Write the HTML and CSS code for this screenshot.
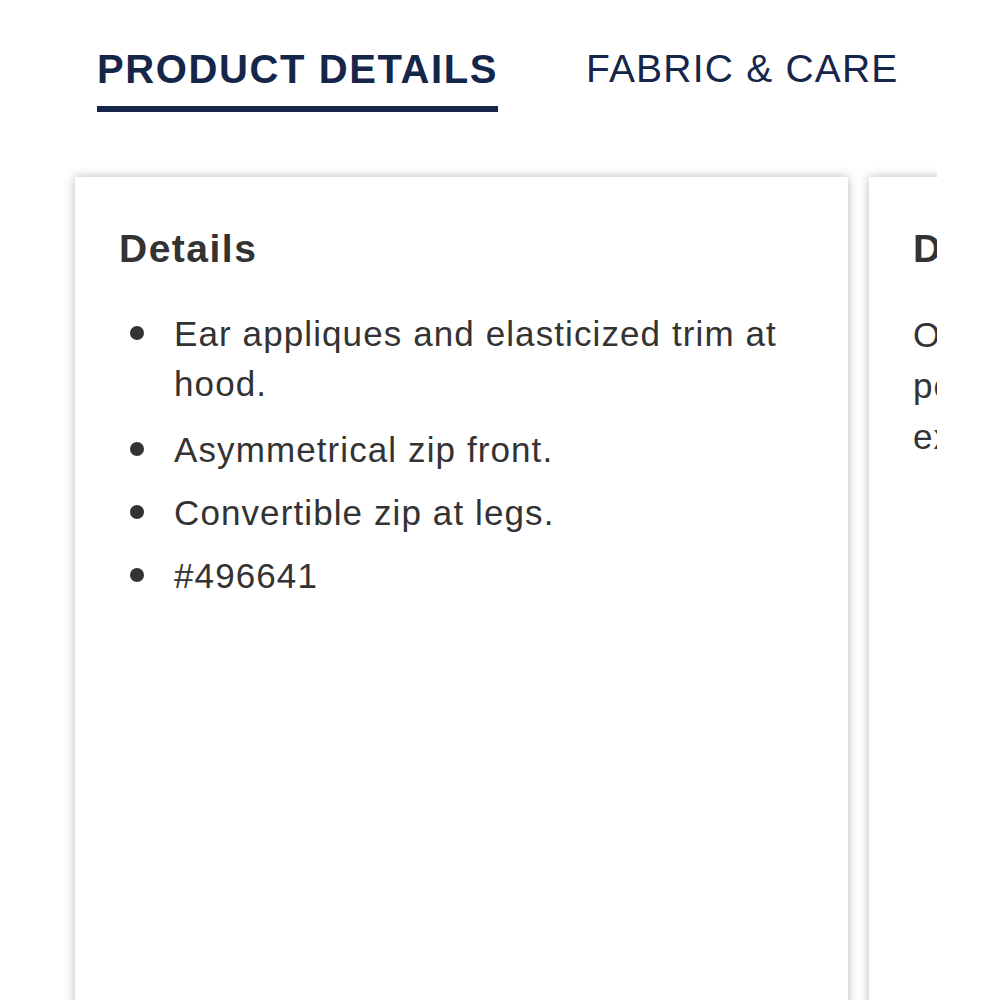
FILE: index.html
```html
<!DOCTYPE html>
<html>
<head>
<meta charset="utf-8">
<link rel="stylesheet" href="styles.css">
</head>
<body>
<nav class="tabs">
  <div class="tab active">PRODUCT DETAILS</div>
  <div class="tab">FABRIC &amp; CARE</div>
</nav>
<div class="carousel">
  <div class="track">
    <section class="card">
      <h2 class="card-title">Details</h2>
      <ul class="list">
        <li>Ear appliques and elasticized trim at hood.</li>
        <li>Asymmetrical zip front.</li>
        <li>Convertible zip at legs.</li>
        <li>#496641</li>
      </ul>
    </section>
    <section class="card">
      <h2 class="card-title">Description</h2>
      <p class="text">Our cozy bunting keeps baby warm in the<br>perfect weather, with a roomy fit for<br>extra layers underneath.</p>
    </section>
  </div>
</div>
</body>
</html>
```
FILE: styles.css
```css
html, body {
  margin: 0;
  padding: 0;
  background: #fff;
}
body {
  font-family: "Liberation Sans", Arial, Helvetica, sans-serif;
  color: #333;
  overflow: hidden;
  height: 1000px;
}
.tabs {
  display: flex;
  gap: 88px;
  padding: 47px 0 0 97px;
}
.tab {
  font-size: 39px;
  line-height: 44px;
  letter-spacing: 1.2px;
  color: #16254a;
  padding-bottom: 15px;
  border-bottom: 6px solid transparent;
  white-space: nowrap;
}
.tab.active {
  font-weight: bold;
  font-size: 40px;
  letter-spacing: 1.6px;
  border-bottom-color: #16254a;
}
.carousel {
  margin: 54px 63px 0;
  overflow: hidden;
  padding: 11px 0 0 12px;
}
.track {
  display: flex;
  gap: 21px;
}
.card {
  flex: 0 0 773px;
  height: 900px;
  box-sizing: border-box;
  background: #fff;
  box-shadow: 0 0 10px rgba(0, 0, 0, 0.28);
  padding: 50px 44px 0;
}
.card-title {
  margin: 0 0 38px;
  font-size: 39px;
  line-height: 44px;
  font-weight: bold;
  letter-spacing: 1.5px;
  color: #333;
}
.list {
  margin: 0;
  padding: 0 0 0 11px;
  list-style: none;
  font-size: 35px;
  line-height: 50px;
  letter-spacing: 1.1px;
}
.list li {
  display: flex;
  align-items: flex-start;
  gap: 30px;
  margin-bottom: 13px;
}
.list li:first-child {
  margin-bottom: 16px;
}
.list li::before {
  content: "";
  flex: 0 0 14px;
  height: 14px;
  margin-top: 17px;
  border-radius: 50%;
  background: #333;
}
.text {
  margin: 0;
  font-size: 35px;
  line-height: 51px;
  letter-spacing: 1.1px;
  white-space: nowrap;
}
```
